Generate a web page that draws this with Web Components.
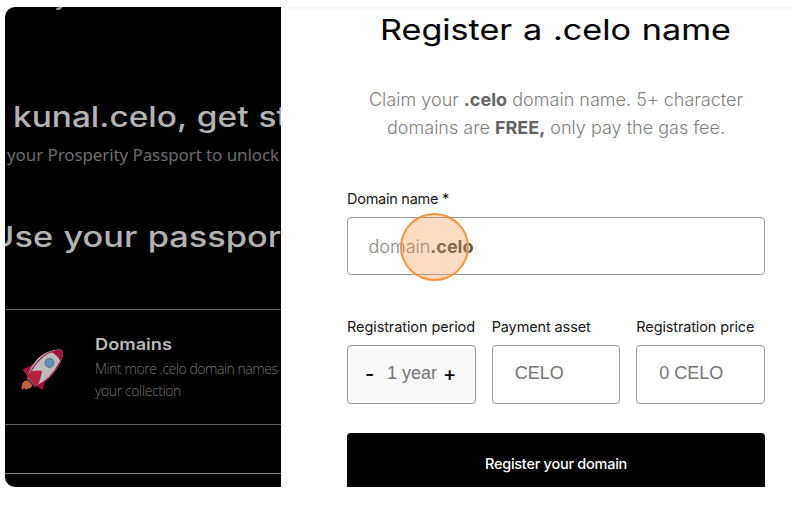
<!DOCTYPE html>
<html lang="en">
<head>
<meta charset="utf-8">
<title>Register a .celo name</title>
<style>
body{margin:0;background:#fff;font-family:Inter,"Liberation Sans",sans-serif;width:792px;height:505px;overflow:hidden}
</style>
</head>
<body>
<celo-app></celo-app>
<script>
const define=(name,html,setup)=>customElements.define(name,class extends HTMLElement{
  constructor(){super();this.attachShadow({mode:'open'}).innerHTML=html;}
  connectedCallback(){if(setup)setup(this,this.shadowRoot);}
});

/* One line of text set to a given measure: by tracking, or by width when "stretch" is present. */
define('fit-line',`<style>:host{display:block;white-space:pre;flex:none}span{display:inline-block;transform-origin:0 50%}::slotted(b){font-weight:700}</style><span><slot></slot></span>`,(el,root)=>{
  const s=root.querySelector('span'),w=+el.getAttribute('w');
  el.style.width=w+'px';
  const natural=s.getBoundingClientRect().width;
  if(!natural)return;
  if(el.hasAttribute('stretch'))s.style.transform=`scaleX(${w/natural})`;
  else s.style.letterSpacing=(w-natural)/el.textContent.length+'px';
});

define('rocket-icon',`<style>:host{display:block;width:42px;height:42px;flex:none}svg{display:block}</style>
<svg width="42" height="42" viewBox="0 0 42 42">
<path d="M1 41C-.2 36.500 1.600 31.500 6 31.500C10.500 31.500 12.500 35 10.500 38C8.500 40.500 6 39 4.500 41L3.500 39Z" fill="#c2633d"/>
<path d="M1.500 20.500L13 15L20 28L21.500 41L14 36L7 29Z" fill="#9d123f"/>
<path d="M23 29L25 27L22 40.500L14 36Z" fill="#9d123f"/>
<path d="M6 28L16 37L13.500 38.500L5 30Z" fill="#45304d"/>
<path d="M6.500 29C9 17 18 4 32 1.500Q40-.5 41.500 2Q43 7 38 16C32 27 24 34 15 37Z" fill="#bbb"/>
<path d="M30 3Q39-1 41.500 2Q43 5 39.500 13Q37 6 30 3Z" fill="#9d123f"/>
<path d="M6.500 29Q16 8 31 2.500M39 13Q30 31 15 37" fill="none" stroke="#9d123f" stroke-width="1.200"/>
<path d="M6 28L11 22Q17 21 21 22Q20 28 18 34L15 37Z" fill="#b5213f"/>
<circle cx="28.500" cy="14" r="4.300" fill="#5a94bb" stroke="#68737c" stroke-width="1.300"/>
</svg>`);

define('feature-row',`<style>
:host{display:flex;box-sizing:border-box;width:276px;height:116px;border-top:1px solid #626262;border-bottom:1px solid #626262;padding:22px 0 0 16px;gap:32px;overflow:hidden}
rocket-icon{margin-top:17px}
.t{font:600 16.500px/24px Inter,sans-serif;color:#b9b9b9;margin-bottom:2px}
.d{font:300 14px/21.500px "Open Sans","Noto Sans",sans-serif;color:#747474}
</style><rocket-icon></rocket-icon><div><div class="t"><slot name="title"></slot></div><div class="d"><slot></slot></div></div>`);

define('passport-panel',`<style>
:host{display:flex;flex-direction:column;width:276px;height:480px;background:#000;overflow:hidden;border-radius:10px 0 0 10px;flex:none}
.cut{height:20px;margin-top:-23px;padding-left:49px;line-height:20px;font-size:28px;color:#999}
.h{font-size:28.500px;line-height:36px;color:#b3b3b3;font-weight:500;word-spacing:1px}
.hello{margin:95px 0 0 7.500px}
.sub{font:400 17px/24px "Noto Sans","Open Sans",sans-serif;color:#6c6c6c;margin:8px 0 0 2px}
.use{margin:52px 0 0 -16px}
feature-row{margin-top:54px}
.line{height:1px;background:#828282;margin-top:48px}
</style>
<div class="cut">y</div>
<fit-line class="h hello" stretch w="275">kunal.celo, get st</fit-line>
<fit-line class="sub" w="272">your Prosperity Passport to unlock</fit-line>
<fit-line class="h use" stretch w="292">Use your passpor</fit-line>
<feature-row><fit-line slot="title" stretch w="77">Domains</fit-line><fit-line w="182.500">Mint more .celo domain names</fit-line><fit-line w="86">your collection</fit-line></feature-row>
<div class="line"></div>`);

define('form-field',`<style>
:host{display:block;min-width:0}
label{display:block;font-size:14.500px;line-height:20px;color:#171717;height:28px}
.box{display:flex;align-items:center;box-sizing:border-box;height:var(--field-h,59px);border:1px solid #9a9a9a;border-radius:4px;padding:0 0 var(--drop,3px) 22px;color:#757575;font:400 18px/24px "Liberation Sans",Arial,sans-serif;background:var(--field-bg,#fff)}
</style><label><slot name="label"></slot></label><div class="box"><slot></slot></div>`);

define('period-stepper',`<style>
:host{display:flex;align-items:center;margin-left:-5px}
.s{font:500 20px/24px Inter,sans-serif;color:#000;padding-top:2px}
.m{width:22px}.v{width:56px}
</style><span class="s m">-</span><span class="v">1 year</span><span class="s">+</span>`);

define('click-marker',`<style>:host{position:absolute;left:119px;top:206px;width:69px;height:68px;box-sizing:border-box;border:2px solid #f7933b;border-radius:50%;background:rgba(251,145,65,.32)}</style>`);

define('register-button',`<style>:host{display:flex;justify-content:center;box-sizing:border-box;height:64px;padding-top:21px;background:#000;border-radius:4px;color:#fff;font-size:14.500px;line-height:20px;font-weight:500}</style><slot></slot>`);

define('register-panel',`<style>
:host{display:block;position:relative;flex:1;box-sizing:border-box;height:480px;overflow:hidden;background:linear-gradient(#f5f5f5,#fff 4px);padding:0 27px 0 66px}
.title{font-size:28.500px;line-height:36px;margin:5px 0 0 33px;color:#000;word-spacing:1px;-webkit-text-stroke:.1px #000}
.desc{font-size:18px;line-height:28px;font-weight:300;color:#808080}
.desc b{color:#636363}
.one{margin:38px 0 0 22px}.two{margin-left:40px}
.name{margin-top:47px;--field-h:58px;--drop:0px}
.val{font:300 18px/24px Inter,sans-serif;color:#858585;margin:2px 0 0 -1.500px}
.name b{color:#555}
.row{display:grid;grid-template-columns:repeat(3,1fr);gap:16px;margin-top:42px}
.period{--field-bg:#fafafa}
register-button{margin-top:29px}
</style>
<fit-line class="title" stretch w="351">Register a .celo name</fit-line>
<fit-line class="desc one" w="374">Claim your <b>.celo</b> domain name. 5+ character</fit-line>
<fit-line class="desc two" w="338">domains are <b>FREE,</b> only pay the gas fee.</fit-line>
<form-field class="name"><fit-line slot="label" w="102">Domain name *</fit-line><fit-line class="val" w="105">domain<b>.celo</b></fit-line></form-field>
<div class="row">
<form-field class="period"><fit-line slot="label" w="128">Registration period</fit-line><period-stepper></period-stepper></form-field>
<form-field><fit-line slot="label" w="99">Payment asset</fit-line>CELO</form-field>
<form-field><fit-line slot="label" w="118">Registration price</fit-line>0 CELO</form-field>
</div>
<register-button><fit-line w="142">Register your domain</fit-line></register-button>
<click-marker></click-marker>`);

define('celo-app',`<style>:host{display:flex;width:787px;height:480px;padding:7px 0 0 5px}</style><passport-panel></passport-panel><register-panel></register-panel>`);
</script>
</body>
</html>
